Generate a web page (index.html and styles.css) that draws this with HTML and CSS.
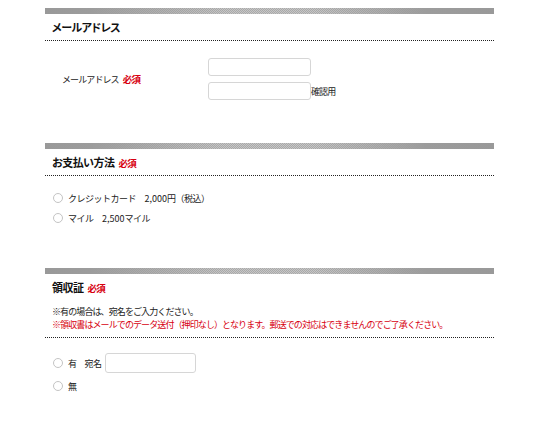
FILE: index.html
```html
<!DOCTYPE html>
<html lang="ja">

<head>
    <meta charset="UTF-8">
    <meta name="viewport" content="width=device-width, initial-scale=1.0">
    <title>お申し込みフォーム</title>
    <link rel="stylesheet" href="styles.css">
</head>

<body>

    <div class="form">

        <section class="sec sec-mail">
            <h2 class="sec-title line">メールアドレス</h2>
            <div class="mail-row">
                <div class="label">メールアドレス<span class="req">必須</span></div>
                <div class="fields">
                    <input type="text" class="text mail">
                    <div class="confirm"><input type="text" class="text mail">確認用</div>
                </div>
            </div>
        </section>

        <section class="sec sec-pay">
            <h2 class="sec-title line">お支払い方法<span class="req">必須</span></h2>
            <div class="choices">
                <label class="choice"><input type="radio" name="pay">クレジットカード　<span class="num">2,000</span>円（税込）</label>
                <label class="choice"><input type="radio" name="pay">マイル　<span class="num">2,500</span>マイル</label>
            </div>
        </section>

        <section class="sec sec-receipt">
            <h2 class="sec-title">領収証<span class="req">必須</span></h2>
            <div class="note line">
                <p>※有の場合は、宛名をご入力ください。</p>
                <p class="red">※領収書はメールでのデータ送付（押印なし）となります。郵送での対応はできませんのでご了承ください。</p>
            </div>
            <div class="choices">
                <label class="choice"><input type="radio" name="receipt">有<span class="atena">宛名</span><input type="text" class="text name"></label>
                <label class="choice"><input type="radio" name="receipt">無</label>
            </div>
        </section>

    </div>

</body>

</html>
```

FILE: styles.css
```css
body {
    margin: 8px 0 0;
    background-color: #fff;
    color: #222;
    font-family: "Noto Sans CJK JP", "Noto Sans", sans-serif;
    font-size: 9px;
    letter-spacing: -0.9px;
}

.form {
    width: 449px;
    margin-left: 45px;
}

.sec::before {
    content: "";
    display: block;
    height: 6px;
    background:
        linear-gradient(to right, #999 0, #9c9c9c 10%, rgba(160, 160, 160, 0) 40%, rgba(160, 160, 160, 0) 60%, #9c9c9c 85%, #999 100%),
        repeating-conic-gradient(#a9a9a9 0 25%, #c6c6c6 0 50%) 0 0 / 2px 2px;
}

.sec-title {
    height: 12px;
    margin: 0;
    padding: 7px 7px;
    font-size: 11px;
    line-height: 12px;
    letter-spacing: -0.5px;
    font-feature-settings: "palt";
    font-weight: bold;
    color: #111;
}

.line {
    border-bottom: 1px dotted #222;
}

.req {
    margin-left: 4px;
    color: #d7000f;
    font-weight: bold;
    font-size: 9.5px;
    letter-spacing: -0.8px;
}

.num {
    letter-spacing: 0;
}

.sec-mail {
    padding-bottom: 43px;
}

.mail-row {
    display: flex;
    align-items: center;
    padding: 17px 0 0 17px;
}

.label {
    width: 146px;
    color: #222;
}

.fields {
    display: flex;
    flex-direction: column;
    gap: 6px;
}

.confirm {
    display: flex;
    align-items: center;
}

.text {
    box-sizing: border-box;
    margin: 0;
    border: 1px solid #d6d6d6;
    border-radius: 3px;
    background: #fff;
    font: inherit;
}

.mail {
    width: 103px;
    height: 18px;
}

.choices {
    display: flex;
    flex-direction: column;
    padding-left: 8px;
}

.choice {
    display: flex;
    align-items: center;
    min-height: 20px;
    color: #222;
    letter-spacing: -0.5px;
}

.choice input[type="radio"] {
    appearance: none;
    -webkit-appearance: none;
    box-sizing: border-box;
    width: 10px;
    height: 10px;
    margin: 0 5px 0 0;
    border: 1px solid #c4c4c4;
    border-radius: 50%;
    background: #fff;
}

.sec-pay .choices {
    padding-top: 12px;
    padding-bottom: 40px;
}

.note {
    padding: 5px 7px 6px;
}

.note p {
    margin: 0;
    line-height: 13px;
}

.red {
    color: #d7000f;
}

.sec-receipt .choices {
    padding-top: 15px;
    gap: 3px;
}

.atena {
    margin-left: 8px;
    margin-right: 3px;
}

.name {
    width: 91px;
    height: 20px;
}
```
